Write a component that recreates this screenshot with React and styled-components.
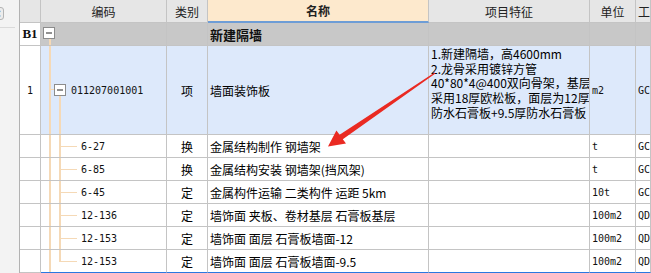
import React from 'react';
import styled, { createGlobalStyle } from 'styled-components';

const GlobalStyle = createGlobalStyle`
  html, body {
    margin: 0;
    padding: 0;
    background: #ffffff;
  }
  body {
    font-family: "Noto Sans CJK SC", "Noto Sans", sans-serif;
    font-size: 12px;
    color: #000;
  }
`;

const TREE = '#f5d9b6';

const rows = [
  { no: '1', code: '011207001001', type: '项', name: '墙面装饰板',
    feature: '1.新建隔墙，高4600mm\n2.龙骨采用镀锌方管\n40*80*4@400双向骨架，基层\n采用18厚欧松板，面层为12厚\n防水石膏板+9.5厚防水石膏板',
    unit: 'm2', extra: 'GCJ' },
];

const children = [
  { code: '6-27', type: '换', name: '金属结构制作 钢墙架', unit: 't', extra: 'GCJ' },
  { code: '6-85', type: '换', name: '金属结构安装 钢墙架(挡风架)', unit: 't', extra: 'GCJ' },
  { code: '6-45', type: '定', name: '金属构件运输 二类构件 运距 5km', unit: '10t', extra: 'GCJ' },
  { code: '12-136', type: '定', name: '墙饰面 夹板、卷材基层 石膏板基层', unit: '100m2', extra: 'QDJ' },
  { code: '12-153', type: '定', name: '墙饰面 面层 石膏板墙面-12', unit: '100m2', extra: 'QDJ' },
  { code: '12-153', type: '定', name: '墙饰面 面层 石膏板墙面-9.5', unit: '100m2', extra: 'QDJ' },
];

const MinusBox = ({ x, y, size }) => (
  <g>
    <rect x={x + 0.5} y={y + 0.5} width={size - 1} height={size - 1} fill="#fff" stroke="#8c8c8c" />
    <line x1={x + 3} x2={x + size - 3} y1={y + size / 2} y2={y + size / 2} stroke="#222" strokeWidth="1" />
  </g>
);

const Connector = ({ variant, last }) => {
  if (variant === 'group') {
    return (
      <TreeSvg width="20" height="22">
        <rect x="8" y="16" width="2" height="6" fill={TREE} />
        <MinusBox x={2} y={4} size={12} />
      </TreeSvg>
    );
  }
  if (variant === 'item') {
    return (
      <TreeSvg width="30" height="88">
        <rect x="8" y="0" width="2" height="88" fill={TREE} />
        <rect x="9" y="43" width="5" height="1" fill={TREE} />
        <rect x="18" y="48" width="2" height="40" fill={TREE} />
        <MinusBox x={13} y={38} size={12} />
      </TreeSvg>
    );
  }
  return (
    <TreeSvg width="40" height="22">
      <rect x="8" y="0" width="2" height="22" fill={TREE} />
      <rect x="18" y="0" width="2" height={last ? 12 : 22} fill={TREE} />
      <rect x="19" y="11" width="17" height="1" fill={TREE} />
    </TreeSvg>
  );
};

const Arrow = () => (
  <ArrowLayer width="651" height="273" viewBox="0 0 651 273">
    <polygon
      fill="#ea2a22"
      points="434.6,72.6 435.4,73.4 342.8,139.2 346,143.6 328,146.5 336.4,130.6 339.6,134.8"
    />
  </ArrowLayer>
);

const App = () => {
  return (
    <>
      <GlobalStyle />
      <Page>
        <SidePanel>
          <CloseTab>×</CloseTab>
          <SideRule />
        </SidePanel>
        <Table>
          <HeadCell />
          <HeadCell>编码</HeadCell>
          <HeadCell>类别</HeadCell>
          <HeadCell $accent>名称</HeadCell>
          <HeadCell>项目特征</HeadCell>
          <HeadCell>单位</HeadCell>
          <HeadCell $clip>工</HeadCell>

          <NoCell $bold>B1</NoCell>
          <TreeCell $bg="#c8c8c8"><Connector variant="group" /></TreeCell>
          <Cell $bg="#c8c8c8" />
          <Cell $bg="#c8c8c8"><GroupTitle>新建隔墙</GroupTitle></Cell>
          <Cell $bg="#c8c8c8" />
          <Cell $bg="#c8c8c8" />
          <Cell $bg="#c8c8c8" />

          {rows.map((r) => (
            <React.Fragment key={r.code}>
              <NoCell>{r.no}</NoCell>
              <TreeCell $bg="#dde9fb">
                <Connector variant="item" />
                <Code>{r.code}</Code>
              </TreeCell>
              <Cell $bg="#dde9fb" $center>{r.type}</Cell>
              <Cell $bg="#dde9fb">{r.name}</Cell>
              <Cell $bg="#dde9fb" $top><Feature>{r.feature}</Feature></Cell>
              <Cell $bg="#dde9fb"><Code>{r.unit}</Code></Cell>
              <Cell $bg="#dde9fb"><Code>{r.extra}</Code></Cell>
            </React.Fragment>
          ))}

          {children.map((c, i) => {
            const last = i === children.length - 1;
            return (
              <React.Fragment key={i}>
                <NoCell />
                <TreeCell $last={last}>
                  <Connector variant="child" last={last} />
                  <Code>{c.code}</Code>
                </TreeCell>
                <Cell $center $last={last}>{c.type}</Cell>
                <Cell $last={last}>{c.name}</Cell>
                <Cell $last={last} />
                <Cell $last={last}><Code>{c.unit}</Code></Cell>
                <Cell $last={last}><Code>{c.extra}</Code></Cell>
              </React.Fragment>
            );
          })}
        </Table>
        <Arrow />
      </Page>
    </>
  );
};

const Page = styled.div`
  position: relative;
  display: flex;
  width: 651px;
  height: 273px;
  overflow: hidden;
`;

const SidePanel = styled.div`
  width: 19px;
  flex: 0 0 19px;
  background: #f3f3f3;
  display: flex;
  flex-direction: column;
  overflow: hidden;
`;

const CloseTab = styled.div`
  width: 14px;
  height: 13px;
  margin: 7px 0 0 -10px;
  box-sizing: border-box;
  border: 1px solid #b4b4b4;
  border-radius: 3px;
  background: #ececec;
  color: #777;
  font-family: "DejaVu Sans", sans-serif;
  font-size: 10px;
  line-height: 11px;
  text-align: right;
  padding-right: 1px;
`;

const SideRule = styled.div`
  width: 15px;
  height: 1px;
  margin-top: 7px;
  background: #dadada;
`;

const Table = styled.div`
  flex: 1;
  display: grid;
  grid-template-columns: 21px 126px 41px 221px 161px 46px 1fr;
  grid-template-rows: 23px 23px 89px repeat(6, 23px);
  border-left: 1px solid #b2b2b2;
  overflow: hidden;
`;

const HeadCell = styled.div`
  box-sizing: border-box;
  display: flex;
  align-items: center;
  justify-content: ${(p) => (p.$clip ? 'flex-start' : 'center')};
  padding-left: ${(p) => (p.$clip ? '2px' : '0')};
  background: ${(p) => (p.$accent ? '#fde9cd' : '#e6e6e6')};
  border-right: 1px solid #c4c4c4;
  border-bottom: ${(p) => (p.$accent ? '2px solid #6e9dd6' : '1px solid #c4c4c4')};
  font-size: 12px;
  font-weight: ${(p) => (p.$accent ? 700 : 400)};
  color: #222;
  white-space: nowrap;
  overflow: hidden;
`;

const Cell = styled.div`
  box-sizing: border-box;
  display: flex;
  align-items: ${(p) => (p.$top ? 'flex-start' : 'center')};
  justify-content: ${(p) => (p.$center ? 'center' : 'flex-start')};
  padding-left: ${(p) => (p.$center ? '0' : '2px')};
  background: ${(p) => p.$bg || '#ffffff'};
  border-right: 1px solid #c4c4c4;
  border-bottom: ${(p) => (p.$last ? '1px solid #2a78e0' : '1px solid #c4c4c4')};
  font-size: 12px;
  white-space: nowrap;
  overflow: hidden;
`;

const NoCell = styled.div`
  box-sizing: border-box;
  display: flex;
  align-items: center;
  justify-content: center;
  background: #ffffff;
  border-right: 1px solid #c4c4c4;
  border-bottom: 1px solid #c4c4c4;
  font-family: ${(p) => (p.$bold ? '"Liberation Serif", serif' : '"DejaVu Sans Mono", monospace')};
  font-size: ${(p) => (p.$bold ? '13px' : '10px')};
  font-weight: ${(p) => (p.$bold ? 700 : 400)};
  color: #111;
`;

const TreeCell = styled(Cell)`
  padding-left: 0;
  align-items: stretch;
`;

const TreeSvg = styled.svg`
  flex: 0 0 auto;
  display: block;
`;

const Code = styled.span`
  align-self: center;
  font-family: "DejaVu Sans Mono", monospace;
  font-size: 10px;
  color: #111;
`;

const GroupTitle = styled.span`
  font-size: 13px;
  font-weight: 700;
  color: #111;
`;

const Feature = styled.div`
  white-space: pre;
  line-height: 14.7px;
  padding-top: 1px;
  font-size: 12px;
`;

const ArrowLayer = styled.svg`
  position: absolute;
  left: 0;
  top: 0;
  pointer-events: none;
`;

export default App;
